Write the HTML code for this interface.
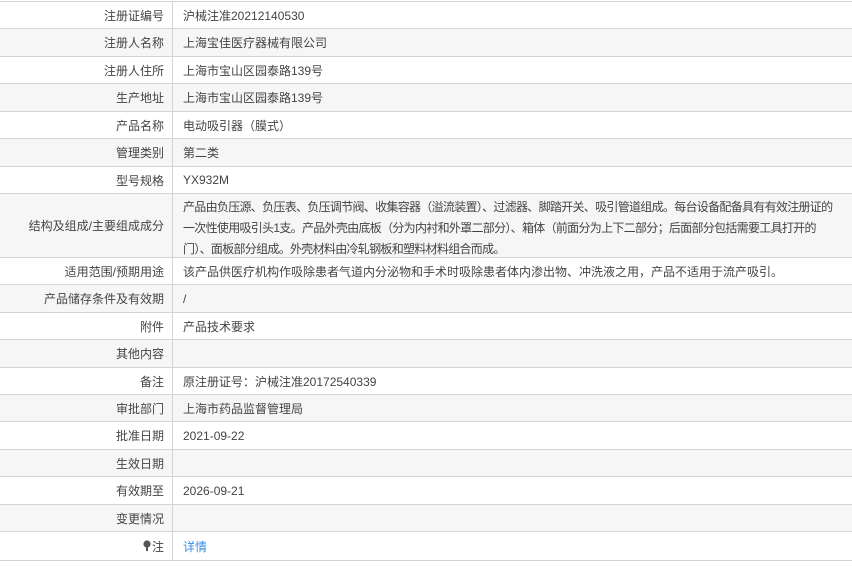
<!DOCTYPE html>
<html><head><meta charset="utf-8"><style>
*{margin:0;padding:0;box-sizing:border-box}
body{width:852px;height:569px;background:#fff;font-family:"Liberation Sans","Noto Sans CJK SC",sans-serif;font-size:12px;color:#444;position:relative;overflow:hidden}
.r{position:absolute;left:0;width:852px;border-top:1px solid #d4d4d4;display:flex}
.r.g{background:#f6f6f6}
.l{width:173px;flex:0 0 173px;border-right:1px solid #d4d4d4;text-align:right;padding-right:8px;display:flex;align-items:center;justify-content:flex-end;height:100%;white-space:nowrap}
.v{padding-left:10px;display:flex;align-items:center;height:100%;white-space:nowrap;flex:1 1 auto}
.v.m{line-height:21px;display:block;padding-top:3px;letter-spacing:-0.7px}
.bot{position:absolute;left:0;width:852px;top:560px;border-top:1px solid #d4d4d4}
a{color:#3a8ee6;text-decoration:none}
</style></head><body>
<div class="r" style="top:1px;height:28px"><div class="l">注册证编号</div><div class="v">沪械注准20212140530</div></div>
<div class="r g" style="top:28px;height:28px"><div class="l">注册人名称</div><div class="v">上海宝佳医疗器械有限公司</div></div>
<div class="r" style="top:56px;height:28px"><div class="l">注册人住所</div><div class="v">上海市宝山区园泰路139号</div></div>
<div class="r g" style="top:83px;height:28px"><div class="l">生产地址</div><div class="v">上海市宝山区园泰路139号</div></div>
<div class="r" style="top:111px;height:28px"><div class="l">产品名称</div><div class="v">电动吸引器（膜式）</div></div>
<div class="r g" style="top:138px;height:28px"><div class="l">管理类别</div><div class="v">第二类</div></div>
<div class="r" style="top:166px;height:27px"><div class="l">型号规格</div><div class="v">YX932M</div></div>
<div class="r g" style="top:193px;height:64px"><div class="l">结构及组成/主要组成成分</div><div class="v m">产品由负压源、负压表、负压调节阀、收集容器（溢流装置）、过滤器、脚踏开关、吸引管道组成。每台设备配备具有有效注册证的<br>一次性使用吸引头1支。产品外壳由底板（分为内衬和外罩二部分）、箱体（前面分为上下二部分；后面部分包括需要工具打开的<br>门）、面板部分组成。外壳材料由冷轧钢板和塑料材料组合而成。</div></div>
<div class="r" style="top:257px;height:28px"><div class="l">适用范围/预期用途</div><div class="v">该产品供医疗机构作吸除患者气道内分泌物和手术时吸除患者体内渗出物、冲洗液之用，产品不适用于流产吸引。</div></div>
<div class="r g" style="top:284px;height:28px"><div class="l">产品储存条件及有效期</div><div class="v">/</div></div>
<div class="r" style="top:312px;height:28px"><div class="l">附件</div><div class="v">产品技术要求</div></div>
<div class="r g" style="top:339px;height:28px"><div class="l">其他内容</div><div class="v"></div></div>
<div class="r" style="top:367px;height:27px"><div class="l">备注</div><div class="v">原注册证号：沪械注准20172540339</div></div>
<div class="r g" style="top:394px;height:28px"><div class="l">审批部门</div><div class="v">上海市药品监督管理局</div></div>
<div class="r" style="top:421px;height:28px"><div class="l">批准日期</div><div class="v">2021-09-22</div></div>
<div class="r g" style="top:449px;height:28px"><div class="l">生效日期</div><div class="v"></div></div>
<div class="r" style="top:476px;height:28px"><div class="l">有效期至</div><div class="v">2026-09-21</div></div>
<div class="r g" style="top:504px;height:28px"><div class="l">变更情况</div><div class="v"></div></div>
<div class="r" style="top:531px;height:29px"><div class="l"><svg width="8" height="12" viewBox="0 0 8 12" style="margin-right:1px"><circle cx="4" cy="4" r="3.6" fill="#555"/><rect x="3" y="7" width="2" height="4" fill="#555"/></svg>注</div><div class="v"><a>详情</a></div></div>
<div class="bot"></div>
</body></html>
